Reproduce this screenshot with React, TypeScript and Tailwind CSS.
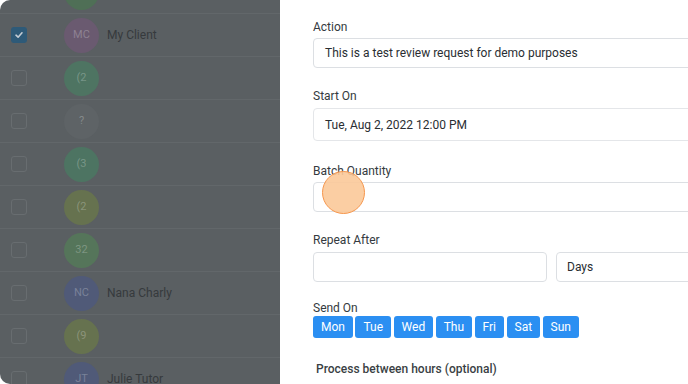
import React from "react";

type Row = { initials: string; color: string; name?: string; checked?: boolean };

const rows: Row[] = [
  { initials: "", color: "#4f6f56" },
  { initials: "MC", color: "#6a5a70", name: "My Client", checked: true },
  { initials: "(2", color: "#4e7462" },
  { initials: "?", color: "#5e6366" },
  { initials: "(3", color: "#4d7462" },
  { initials: "(2", color: "#66724f" },
  { initials: "32", color: "#55755a" },
  { initials: "NC", color: "#505a78", name: "Nana Charly" },
  { initials: "(9", color: "#66724f" },
  { initials: "JT", color: "#505a78", name: "Julie Tutor" },
];

const days = ["Mon", "Tue", "Wed", "Thu", "Fri", "Sat", "Sun"];

export default function App() {
  return (
    <div
      className="w-[688px] h-[384px] bg-white overflow-hidden"
      style={{ fontFamily: "Roboto, Inter, 'Noto Sans', 'Liberation Sans', sans-serif" }}
    >
      <div className="relative flex w-full h-full rounded-[10px] overflow-hidden">
        {/* Left dimmed list */}
        <div className="w-[280px] shrink-0 h-full bg-[#5a5f62] overflow-hidden">
          <div className="-mt-[29px]">
            {rows.map((r, i) => (
              <div
                key={i}
                className="h-[43px] flex items-center border-b border-[#62676a]"
              >
                <div className="w-[64px] shrink-0 pl-[11px] flex items-center">
                  {r.checked ? (
                    <div className="w-[16px] h-[16px] rounded-[3px] bg-[#2e5a78] flex items-center justify-center">
                      <svg width="10" height="10" viewBox="0 0 10 10">
                        <path
                          d="M2 5.2 L4.1 7.2 L8 2.8"
                          stroke="#c4ccd4"
                          strokeWidth="1.6"
                          fill="none"
                          strokeLinecap="round"
                          strokeLinejoin="round"
                        />
                      </svg>
                    </div>
                  ) : (
                    <div className="w-[16px] h-[16px] rounded-[3px] border border-[#686d70]" />
                  )}
                </div>
                <div
                  className="w-[35px] h-[35px] shrink-0 rounded-full flex items-center justify-center text-[11px] text-white/25"
                  style={{ backgroundColor: r.color }}
                >
                  {r.initials}
                </div>
                {r.name && (
                  <div className="ml-[8px] text-[12px] text-[#363a3d]">{r.name}</div>
                )}
              </div>
            ))}
          </div>
        </div>

        {/* Right form panel */}
        <div className="flex-1 h-full bg-white overflow-hidden rounded-tr-[10px]">
          <div className="w-[510px] pl-[33px] pt-[19px] text-[12px] text-[#343a40]">
            <div className="leading-4 mb-[3px]">Action</div>
            <div className="w-[477px] h-[30px] border border-[#dcdfe3] rounded-[4px] flex items-center pl-[11px] text-[#2a2e32]">
              This is a test review request for demo purposes
            </div>

            <div className="leading-4 mt-[20px] mb-[4px]">Start On</div>
            <div className="w-[477px] h-[33px] border border-[#e4e6e9] rounded-[4px] flex items-center pl-[11px] text-[#2a2e32]">
              Tue, Aug 2, 2022 12:00 PM
            </div>

            <div className="leading-4 mt-[22px] mb-[3px]">Batch Quantity</div>
            <div className="w-[477px] h-[30px] border border-[#dcdfe3] rounded-[4px]" />

            <div className="leading-4 mt-[20px] mb-[4px]">Repeat After</div>
            <div className="flex gap-[9px]">
              <div className="w-[234px] shrink-0 h-[30px] border border-[#dcdfe3] rounded-[4px]" />
              <div className="w-[234px] shrink-0 h-[30px] border border-[#dcdfe3] rounded-[4px] flex items-center pl-[10px] text-[#2a2e32]">
                Days
              </div>
            </div>

            <div className="leading-4 mt-[18px]">Send On</div>
            <div className="flex gap-[2.5px]">
              {days.map((d) => (
                <div
                  key={d}
                  className="h-[22px] px-[8px] rounded-[3px] bg-[#2b8ff2] text-white flex items-center text-[12px]"
                >
                  {d}
                </div>
              ))}
            </div>

            <div className="leading-4 mt-[23px] pl-[3px] font-medium text-[#3a3f44]">
              Process between hours (optional)
            </div>
          </div>
        </div>

        {/* click indicator */}
        <div className="absolute left-[322px] top-[171px] w-[43px] h-[43px] rounded-full bg-[#fbc999]/90 border-[1.5px] border-[#f6964c]" />
      </div>
    </div>
  );
}
